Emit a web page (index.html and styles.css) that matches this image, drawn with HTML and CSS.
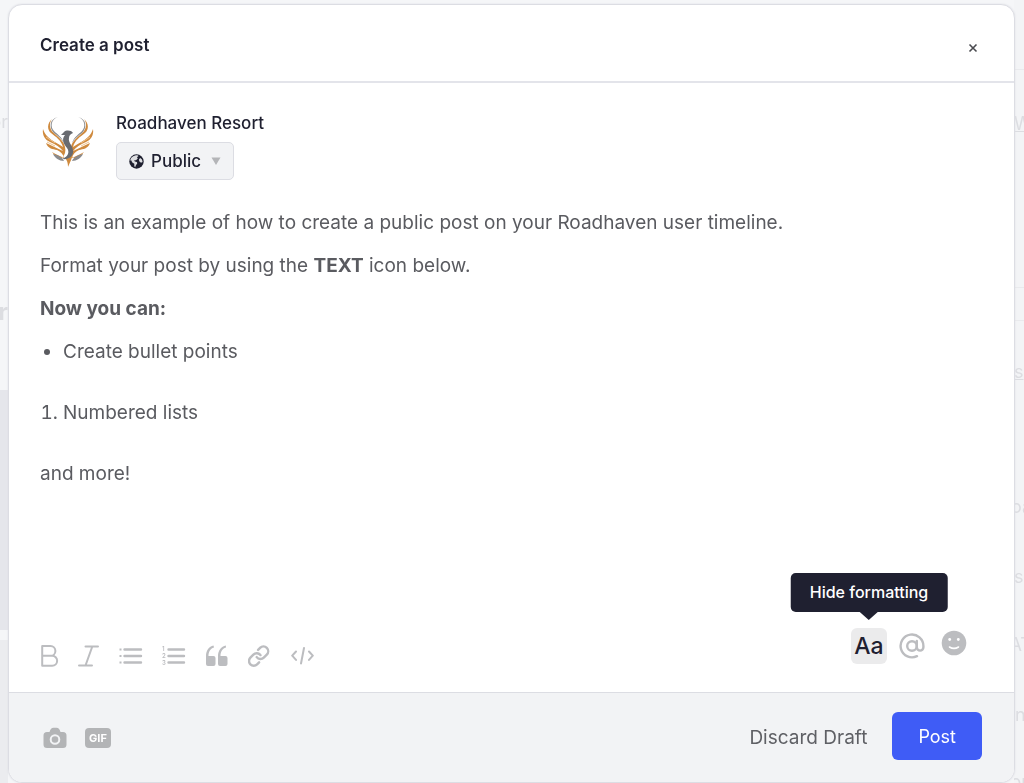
FILE: index.html
```html
<!DOCTYPE html>
<html lang="en">
<head>
<meta charset="utf-8">
<meta name="viewport" content="width=device-width, initial-scale=1">
<title>Create a post</title>
<link rel="stylesheet" href="styles.css">
</head>
<body>
<div class="backdrop" aria-hidden="true">
  <div class="rail rail-left">
    <span class="frag frag-l1">or</span>
    <span class="frag frag-l2">r</span>
    <span class="cover"></span>
    <span class="cover-foot"></span>
  </div>
  <div class="rail rail-right">
    <span class="rule rule-1"></span>
    <span class="frag frag-r1">W</span>
    <span class="rule rule-2"></span>
    <span class="rule rule-3"></span>
    <span class="frag frag-r2">s</span>
    <span class="frag frag-r3">oa</span>
    <span class="frag frag-r4">s</span>
    <span class="frag frag-r5">AT</span>
    <span class="frag frag-r6">n</span>
    <span class="frag frag-r7">or</span>
  </div>
</div>

<main class="modal" role="dialog" aria-labelledby="modal-title">
  <header class="modal-header">
    <h1 class="modal-title" id="modal-title">Create a post</h1>
    <button class="close" type="button" aria-label="Close">
      <svg width="10" height="10" viewBox="0 0 10 10"><path d="M1.5 1.5l7 7M8.5 1.5l-7 7" stroke="#4a4b50" stroke-width="1.6" fill="none"/></svg>
    </button>
  </header>

  <section class="composer">
    <div class="author">
      <svg class="avatar" viewBox="0 0 56 56" role="img" aria-label="Roadhaven Resort logo">
        <g fill="#cf8a3e">
          <path d="M12 6C7 10 7 17 11 20C16 24 21 27 23 34C17 30 12 28 8 24C5 21 4 19 3 16C2 22 5 27 10 29C15 31 20 34 23 38C17 35 12 33 6 30C8 36 13 36 17 37C21 39 23 41 24 45C20 43 15 41 12 39C14 42 18 45 22 45C25 42 26 38 25 34C24 28 18 24 14 20C9 16 9 10 12 6z"/>
          <path d="M44 6C49 10 49 17 45 20C40 24 35 27 33 34C39 30 44 28 48 24C51 21 52 19 53 16C54 22 51 27 46 29C41 31 36 34 33 38C39 35 44 33 50 30C48 36 43 36 39 37C35 39 33 41 32 45C36 43 41 41 44 39C42 42 38 45 34 45C31 42 30 38 31 34C32 28 38 24 42 20C47 16 47 10 44 6z"/>
          <path d="M25 45C29 44 31 42 33 39C33 44 30 49 28 54C28 50 27 47 25 45z"/>
        </g>
        <g fill="#8a8b8e">
          <path d="M18 4C11 6 10 14 14 18C17 21 22 24 24 30C21 25 17 22 14 20C9 15 9 6 18 4z"/>
          <path d="M38 4C45 6 46 14 42 18C39 21 34 24 32 30C35 25 39 22 42 20C47 15 47 6 38 4z"/>
          <path d="M13 41C18 42 22 44 24 48C19 48 15 45 13 41zM43 41C38 42 34 44 32 48C37 48 41 45 43 41z"/>
        </g>
        <path fill="#696b70" d="M33 20C31 17 26 17 24 19L21 22L25 22C21 27 24 31 27 35C30 39 28 44 22 46C30 47 34 42 33 37C32 32 28 29 29 25C29 22 31 21 33 20z"/>
        <path d="M6 24l9 6M7 29l8 4M50 24l-9 6M49 29l-8 4" stroke="#efc28c" fill="none"/>
      </svg>
      <div class="author-info">
        <div class="author-name">Roadhaven Resort</div>
        <button class="privacy" type="button" aria-haspopup="listbox">
          <svg width="15" height="15" viewBox="0 0 15 15" aria-hidden="true">
            <circle cx="7.5" cy="7.5" r="7.2" fill="#1f2030"/>
            <path d="M8.500 1.300L9.500 2L8 3.200L8.800 4.400L7 6.300H5.200L5.800 7.600L7.800 8L8.300 9.300L6.800 11.500L6.200 13.300L5.300 12.300V9.800L3.300 8.500L2 6L1.300 7C1.300 4 4 1.300 8.500 1.300zM11.200 4L13 5.500L13.600 8L12 8.800L10.200 7.200L10 5.200z" fill="#f2f3f5" opacity=".9"/>
          </svg>
          <span>Public</span>
          <svg class="caret" width="10" height="8" viewBox="0 0 10 8" aria-hidden="true"><path d="M.5 .5h9L5 8z" fill="#b4b5b8"/></svg>
        </button>
      </div>
    </div>

    <div class="editor" contenteditable="true" role="textbox" aria-multiline="true" aria-label="Post content" spellcheck="false">
      <p>This is an example of how to create a public post on your Roadhaven user timeline.</p>
      <p>Format your post by using the <strong>TEXT</strong> icon below.</p>
      <p><strong>Now you can:</strong></p>
      <ul><li>Create bullet points</li></ul>
      <ol><li>Numbered lists</li></ol>
      <p>and more!</p>
    </div>

    <div class="toolbar">
      <div class="format-tools">
        <button class="tool" type="button" aria-label="Bold">
          <svg width="19" height="24" viewBox="0 0 19 24"><path d="M2.2 2h8.3a4.8 4.8 0 0 1 0 9.8H2.2zM2.2 11.8h10a4.9 4.9 0 0 1 0 9.9h-10z" /></svg>
        </button>
        <button class="tool" type="button" aria-label="Italic">
          <svg width="22" height="24" viewBox="0 0 22 24"><path d="M7.5 2.5H20M1 21.5h13M14.3 2.5L7.5 21.5"/></svg>
        </button>
        <button class="tool" type="button" aria-label="Bulleted list">
          <svg width="24" height="24" viewBox="0 0 24 24"><path class="bars" d="M5.5 5.5H22M5.5 12H22M5.5 18.5H22"/><path class="solid" d="M.5 4.5h2v2h-2zM.5 11h2v2h-2zM.5 17.5h2v2h-2z"/></svg>
        </button>
        <button class="tool" type="button" aria-label="Numbered list">
          <svg width="24" height="24" viewBox="0 0 24 24"><path class="bars" d="M6.5 5.5H22M6.5 12H22M6.5 18.5H22"/><text class="digit" x="0" y="7">1</text><text class="digit" x="0" y="14">2</text><text class="digit" x="0" y="21">3</text></svg>
        </button>
        <button class="tool" type="button" aria-label="Quote">
          <svg width="24" height="24" viewBox="0 0 24 24"><path class="solid" d="M8.500 1.500C4 2.500 1 6.500 1 12v8a2 2 0 0 0 2 2h5.500a2 2 0 0 0 2-2v-6a2 2 0 0 0-2-2H3.500C3.500 8 5 4.800 9 3.500zM20.800 1.500C16.300 2.500 13 6.500 13 12v8a2 2 0 0 0 2 2h5.500a2 2 0 0 0 2-2v-6a2 2 0 0 0-2-2h-5c0-4 1.500-7.200 5.500-8.500z"/></svg>
        </button>
        <button class="tool" type="button" aria-label="Link">
          <svg width="24" height="24" viewBox="0 0 24 24"><path class="chain" d="M9.200 12.600a4.700 4.700 0 0 0 7.100.500l3-3a4.700 4.700 0 0 0-6.700-6.700l-2 2M13 10.600a4.700 4.700 0 0 0-7.100-.500l-3 3a4.700 4.700 0 0 0 6.700 6.700l2-2" transform="translate(-.5 .5)"/></svg>
        </button>
        <button class="tool" type="button" aria-label="Code">
          <svg width="24" height="24" viewBox="0 0 24 24"><path d="M5 7.500L1.200 11.700l3.800 4.200M18 7.500l3.800 4.200-3.800 4.200M13 4L10 19.500"/></svg>
        </button>
      </div>
      <div class="insert-tools">
        <div class="format-toggle">
          <button class="toggle" type="button" aria-pressed="true" aria-describedby="format-tip">Aa</button>
          <div class="tooltip" id="format-tip" role="tooltip">Hide formatting</div>
        </div>
        <button class="tool" type="button" aria-label="Mention">
          <svg width="26" height="26" viewBox="0 0 26 26"><circle class="chain" cx="13" cy="13" r="4.800"/><path class="chain" d="M17.800 8v6.300a3.300 3.300 0 0 0 6.600 0V13A11.400 11.400 0 1 0 18 23.200"/></svg>
        </button>
        <button class="tool emoji" type="button" aria-label="Emoji">
          <svg width="26" height="26" viewBox="0 0 26 26"><circle class="solid" cx="13" cy="13" r="12.300"/><circle class="face" cx="8.700" cy="9.500" r="1.400"/><circle class="face" cx="17.300" cy="9.500" r="1.400"/><path class="smile" d="M8.500 17q4.500 2.800 9 0"/></svg>
        </button>
      </div>
    </div>
  </section>

  <footer class="modal-footer">
    <div class="media-tools">
      <button class="tool" type="button" aria-label="Add photo">
        <svg width="24" height="22" viewBox="0 0 24 22"><path fill="#b3b4b6" d="M4 5h2.500C7.500 2 8.500.8 10.500.8h3C15.500.8 16.500 2 17.500 5H20q3.500 0 3.500 3.500v9q0 3.500-3.500 3.500H4Q.5 21 .5 17.500v-9Q.5 5 4 5z"/><circle class="lens" cx="12" cy="12.500" r="4.300"/></svg>
      </button>
      <button class="gif" type="button">GIF</button>
    </div>
    <div class="actions">
      <button class="discard" type="button">Discard Draft</button>
      <button class="submit" type="submit">Post</button>
    </div>
  </footer>
</main>
</body>
</html>
```
FILE: styles.css
```css
* { box-sizing: border-box; }

body {
  margin: 0;
  min-height: 100vh;
  display: flex;
  padding: 4px 9px 0 8px;
  background: #f5f6f8;
  color: #1f2030;
  font-family: Inter, "Liberation Sans", sans-serif;
}

button {
  margin: 0;
  padding: 0;
  border: 0;
  background: none;
  color: inherit;
  font: inherit;
  cursor: pointer;
}

svg { display: block; }

/* Dimmed page behind the dialog */
.backdrop { position: fixed; inset: 0; overflow: hidden; }
.rail { position: absolute; top: 0; bottom: 0; overflow: hidden; color: #dcdde1; font-size: 18px; line-height: 20px; }
.rail-left { left: 0; width: 8px; }
.rail-right { right: 0; width: 10px; background: #f3f4f6; }
.frag { position: absolute; }
.frag-l1 { top: 112px; right: 0; }
.frag-l2 { top: 302px; right: 0; font-size: 24px; font-weight: 700; }
.cover { position: absolute; inset: 390px 0 153px; background: #e5e6eb; }
.cover-foot { position: absolute; inset: 640px 0 0; background: #ebecef; }
.rule { position: absolute; left: 0; right: 0; height: 1px; background: #e9eaed; }
.rule-1 { top: 69px; }
.rule-2 { top: 287px; }
.rule-3 { top: 320px; }
.frag-r1 { top: 114px; left: 0; text-decoration: underline; }
.frag-r2 { top: 362px; left: 0; text-decoration: underline; }
.frag-r3 { top: 497px; right: -8px; }
.frag-r4 { top: 567px; left: 0; }
.frag-r5 { top: 635px; right: -8px; }
.frag-r6 { top: 705px; left: 1px; }
.frag-r7 { top: 772px; right: -4px; }

.modal {
  position: relative;
  flex: 1;
  min-width: 0;
  display: flex;
  flex-direction: column;
  overflow: hidden;
  border: 1px solid #dcdde3;
  border-radius: 14px;
  background: #fff;
  box-shadow: 0 0 2px #dcdde3;
}

.modal-header {
  display: flex;
  align-items: center;
  justify-content: space-between;
  height: 78px;
  padding: 4px 32px 0 31px;
  border-bottom: 2px solid #e3e4ea;
}

.modal-title { margin: 0; font-size: 17px; line-height: 24px; font-weight: 600; }
.close { padding: 9px 4px 4px; }

.composer {
  flex: 1;
  display: flex;
  flex-direction: column;
  padding: 28px 47px 28px 31px;
}

.author { display: flex; gap: 20px; }
.avatar { width: 56px; height: 56px; margin-top: 2px; }
.author-name { font-size: 17px; line-height: 24px; font-weight: 500; }

.privacy {
  display: flex;
  align-items: center;
  gap: 7px;
  height: 38px;
  margin-top: 7px;
  padding: 0 12px;
  border: 1px solid #dcdde3;
  border-radius: 5px;
  background: #f2f3f5;
  font-size: 17px;
  font-weight: 500;
}
.caret { margin-left: 3px; }

.editor {
  flex: 1;
  padding-top: 28px;
  outline: 0;
  color: #5a5b60;
  font-size: 19px;
  line-height: 30px;
}
.editor p { margin: 0 0 13px; }
.editor ul, .editor ol { margin: 0 0 31px; padding-left: 23px; }

.toolbar {
  display: flex;
  align-items: center;
  justify-content: space-between;
  height: 36px;
}
.format-tools { display: flex; gap: 19px; padding-top: 20px; }
.insert-tools { display: flex; align-items: center; gap: 12px; }

.tool svg { fill: none; stroke: #bcbdc0; stroke-width: 2; stroke-linecap: round; stroke-linejoin: round; }
.tool .solid { fill: #bcbdc0; stroke: none; }
.tool .bars { stroke-width: 2.4; }
.tool .chain { stroke-width: 2.4; }
.tool .digit { fill: #bcbdc0; stroke: none; font-size: 6px; font-weight: 600; }
.tool .face { fill: #fff; stroke: none; }
.tool .smile { stroke: #fff; stroke-width: 1.6; }
.tool .lens { stroke: #f2f3f5; }
.emoji { margin: 0 0 6px 4px; }

.format-toggle { position: relative; }
.toggle {
  display: block;
  width: 36px;
  height: 36px;
  border-radius: 6px;
  background: #ebebec;
  font-size: 23px;
  font-weight: 500;
}
.tooltip {
  position: absolute;
  bottom: 52px;
  left: 50%;
  transform: translateX(-50%);
  padding: 8px 19px;
  border-radius: 5px;
  background: #1f2030;
  color: #fff;
  font-size: 16px;
  line-height: 23px;
  font-weight: 500;
  white-space: nowrap;
}
.tooltip::after {
  content: "";
  position: absolute;
  top: 100%;
  left: 50%;
  margin-left: -9px;
  border: 9px solid transparent;
  border-top: 8px solid #1f2030;
  border-bottom: 0;
}

.modal-footer {
  display: flex;
  align-items: center;
  justify-content: space-between;
  padding: 19px 32px 22px 34px;
  border-top: 1px solid #dcdde3;
  background: #f2f3f5;
}
.media-tools { display: flex; align-items: center; gap: 18px; padding-top: 4px; }
.media-tools .tool svg { stroke: none; }
.gif {
  width: 26px;
  height: 20px;
  border-radius: 4px;
  background: #b3b4b6;
  color: #fff;
  font-size: 11px;
  line-height: 20px;
  font-weight: 700;
}
.actions { display: flex; align-items: center; gap: 25px; }
.discard { padding-top: 4px; color: #5f6065; font-size: 19px; line-height: 24px; }
.submit {
  height: 48px;
  padding: 0 26px;
  border-radius: 6px;
  background: #3f5cf6;
  color: #fff;
  font-size: 18px;
}
```
